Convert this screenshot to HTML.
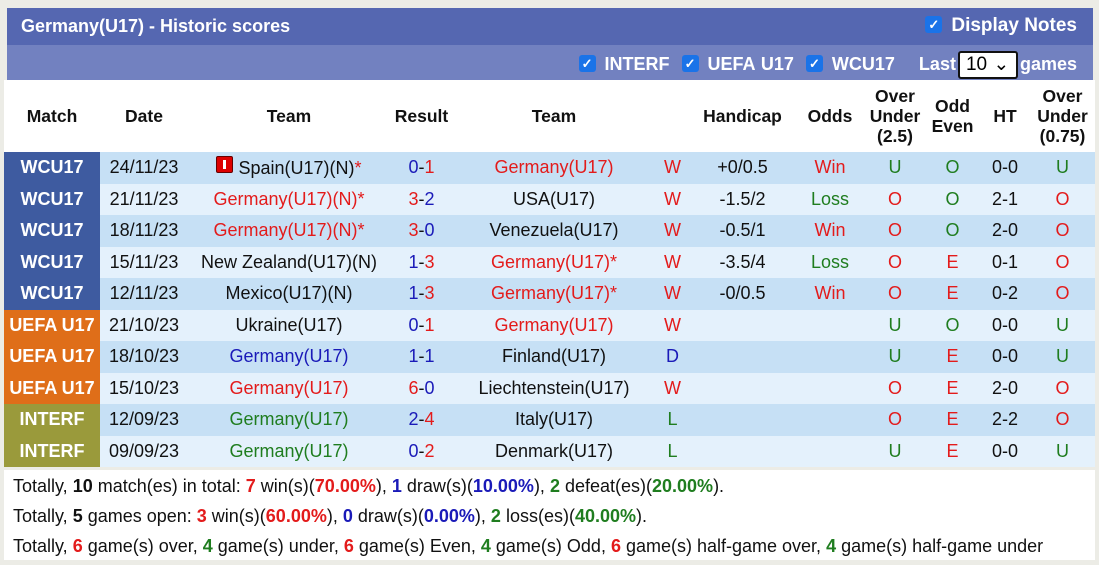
<!DOCTYPE html>
<html><head><meta charset="utf-8"><style>
body{margin:0;width:1099px;height:565px;background:#ecece6;font-family:"Liberation Sans",Arial,sans-serif;overflow:hidden;position:relative}
.title{position:absolute;left:7px;top:8px;width:1086px;height:37px;background:#5567b1;color:#fff;font-weight:bold;font-size:18px}
.title .l{position:absolute;left:14px;top:8px}
.title .r{position:absolute;right:16px;top:7px;font-size:19px}
.filt{position:absolute;left:7px;top:45px;width:1086px;height:35px;background:#7281c0;color:#fff;font-weight:bold;font-size:18px}
.filt .r{position:absolute;right:16px;top:6px;white-space:nowrap;word-spacing:1px}
.cb{display:inline-block;width:17px;height:17px;background:#1a73e8;border-radius:3px;color:#fff;font-size:13px;line-height:17px;text-align:center;vertical-align:2px;margin-right:9px}
.sel{display:inline-block;border:2px solid #111;border-radius:3px;background:#fff;color:#000;font-weight:normal;width:60px;height:28px;line-height:24px;vertical-align:middle;padding-left:6px;box-sizing:border-box;font-size:19px;margin:0 2px}
table{position:absolute;left:4px;top:80px;width:1091px;border-collapse:collapse;font-size:18px;table-layout:fixed}
th{background:#fff;height:72px;font-weight:bold;font-size:17.5px;color:#111;padding:0;line-height:20px}
td{height:31.5px;padding:0;text-align:center;color:#111;white-space:nowrap}
tr.a td{background:#c6e0f5}tr.b td{background:#e4f1fc}
td.m{color:#fff;font-weight:bold;font-size:18px}
.w td.m{background:#3e5ba0!important}.u td.m{background:#df6e19!important}.i td.m{background:#9a9a3b!important}
.R{color:#e31b1b}.B{color:#1a1ab8}.G{color:#1f7d1f}
.sum{position:absolute;left:4px;top:470px;width:1091px;height:90px;background:#fff;font-size:18px;color:#111}
.sum div{position:absolute;left:9px}
.sr{color:#e31b1b;font-weight:bold}.sb{color:#1a1ab8;font-weight:bold}.sg{color:#1f7d1f;font-weight:bold}
.flag{display:inline-block;width:15px;height:15px;background:#d00;border:1px solid #600;border-radius:2px;vertical-align:1px;position:relative}
.flag:after{content:"";position:absolute;left:6px;top:3px;width:3px;height:9px;background:#fff}
</style></head><body>
<div class="title"><span class="l">Germany(U17) - Historic scores</span><span class="r"><span class="cb">✓</span>Display Notes</span></div>
<div class="filt"><span class="r"><span class="cb">✓</span>INTERF &nbsp;<span class="cb">✓</span>UEFA U17 &nbsp;<span class="cb">✓</span>WCU17 &nbsp;&nbsp; Last<span class="sel">10 ⌄</span>games</span></div>
<table>
<colgroup><col style="width:96px"><col style="width:88px"><col style="width:202px"><col style="width:63px"><col style="width:202px"><col style="width:35px"><col style="width:105px"><col style="width:70px"><col style="width:60px"><col style="width:55px"><col style="width:50px"><col style="width:65px"></colgroup>
<tr><th>Match</th><th>Date</th><th>Team</th><th>Result</th><th>Team</th><th></th><th>Handicap</th><th>Odds</th><th>Over<br>Under<br>(2.5)</th><th>Odd<br>Even</th><th>HT</th><th>Over<br>Under<br>(0.75)</th></tr>
<tr class="a w"><td class="m">WCU17</td><td>24/11/23</td><td><span class="flag"></span> Spain(U17)(N)<span class="R">*</span></td><td><span class="B">0</span>-<span class="R">1</span></td><td class="R">Germany(U17)</td><td class="R">W</td><td>+0/0.5</td><td class="R">Win</td><td class="G">U</td><td class="G">O</td><td>0-0</td><td class="G">U</td></tr>
<tr class="b w"><td class="m">WCU17</td><td>21/11/23</td><td class="R">Germany(U17)(N)*</td><td><span class="R">3</span>-<span class="B">2</span></td><td>USA(U17)</td><td class="R">W</td><td>-1.5/2</td><td class="G">Loss</td><td class="R">O</td><td class="G">O</td><td>2-1</td><td class="R">O</td></tr>
<tr class="a w"><td class="m">WCU17</td><td>18/11/23</td><td class="R">Germany(U17)(N)*</td><td><span class="R">3</span>-<span class="B">0</span></td><td>Venezuela(U17)</td><td class="R">W</td><td>-0.5/1</td><td class="R">Win</td><td class="R">O</td><td class="G">O</td><td>2-0</td><td class="R">O</td></tr>
<tr class="b w"><td class="m">WCU17</td><td>15/11/23</td><td>New Zealand(U17)(N)</td><td><span class="B">1</span>-<span class="R">3</span></td><td class="R">Germany(U17)*</td><td class="R">W</td><td>-3.5/4</td><td class="G">Loss</td><td class="R">O</td><td class="R">E</td><td>0-1</td><td class="R">O</td></tr>
<tr class="a w"><td class="m">WCU17</td><td>12/11/23</td><td>Mexico(U17)(N)</td><td><span class="B">1</span>-<span class="R">3</span></td><td class="R">Germany(U17)*</td><td class="R">W</td><td>-0/0.5</td><td class="R">Win</td><td class="R">O</td><td class="R">E</td><td>0-2</td><td class="R">O</td></tr>
<tr class="b u"><td class="m">UEFA U17</td><td>21/10/23</td><td>Ukraine(U17)</td><td><span class="B">0</span>-<span class="R">1</span></td><td class="R">Germany(U17)</td><td class="R">W</td><td></td><td></td><td class="G">U</td><td class="G">O</td><td>0-0</td><td class="G">U</td></tr>
<tr class="a u"><td class="m">UEFA U17</td><td>18/10/23</td><td class="B">Germany(U17)</td><td><span class="B">1</span>-<span class="B">1</span></td><td>Finland(U17)</td><td class="B">D</td><td></td><td></td><td class="G">U</td><td class="R">E</td><td>0-0</td><td class="G">U</td></tr>
<tr class="b u"><td class="m">UEFA U17</td><td>15/10/23</td><td class="R">Germany(U17)</td><td><span class="R">6</span>-<span class="B">0</span></td><td>Liechtenstein(U17)</td><td class="R">W</td><td></td><td></td><td class="R">O</td><td class="R">E</td><td>2-0</td><td class="R">O</td></tr>
<tr class="a i"><td class="m">INTERF</td><td>12/09/23</td><td class="G">Germany(U17)</td><td><span class="B">2</span>-<span class="R">4</span></td><td>Italy(U17)</td><td class="G">L</td><td></td><td></td><td class="R">O</td><td class="R">E</td><td>2-2</td><td class="R">O</td></tr>
<tr class="b i"><td class="m">INTERF</td><td>09/09/23</td><td class="G">Germany(U17)</td><td><span class="B">0</span>-<span class="R">2</span></td><td>Denmark(U17)</td><td class="G">L</td><td></td><td></td><td class="G">U</td><td class="R">E</td><td>0-0</td><td class="G">U</td></tr>
</table>
<div class="sum">
<div style="top:6px">Totally, <b>10</b> match(es) in total: <span class="sr">7</span> win(s)(<span class="sr">70.00%</span>), <span class="sb">1</span> draw(s)(<span class="sb">10.00%</span>), <span class="sg">2</span> defeat(es)(<span class="sg">20.00%</span>).</div>
<div style="top:36px">Totally, <b>5</b> games open: <span class="sr">3</span> win(s)(<span class="sr">60.00%</span>), <span class="sb">0</span> draw(s)(<span class="sb">0.00%</span>), <span class="sg">2</span> loss(es)(<span class="sg">40.00%</span>).</div>
<div style="top:66px">Totally, <span class="sr">6</span> game(s) over, <span class="sg">4</span> game(s) under, <span class="sr">6</span> game(s) Even, <span class="sg">4</span> game(s) Odd, <span class="sr">6</span> game(s) half-game over, <span class="sg">4</span> game(s) half-game under</div>
</div>
</body></html>
